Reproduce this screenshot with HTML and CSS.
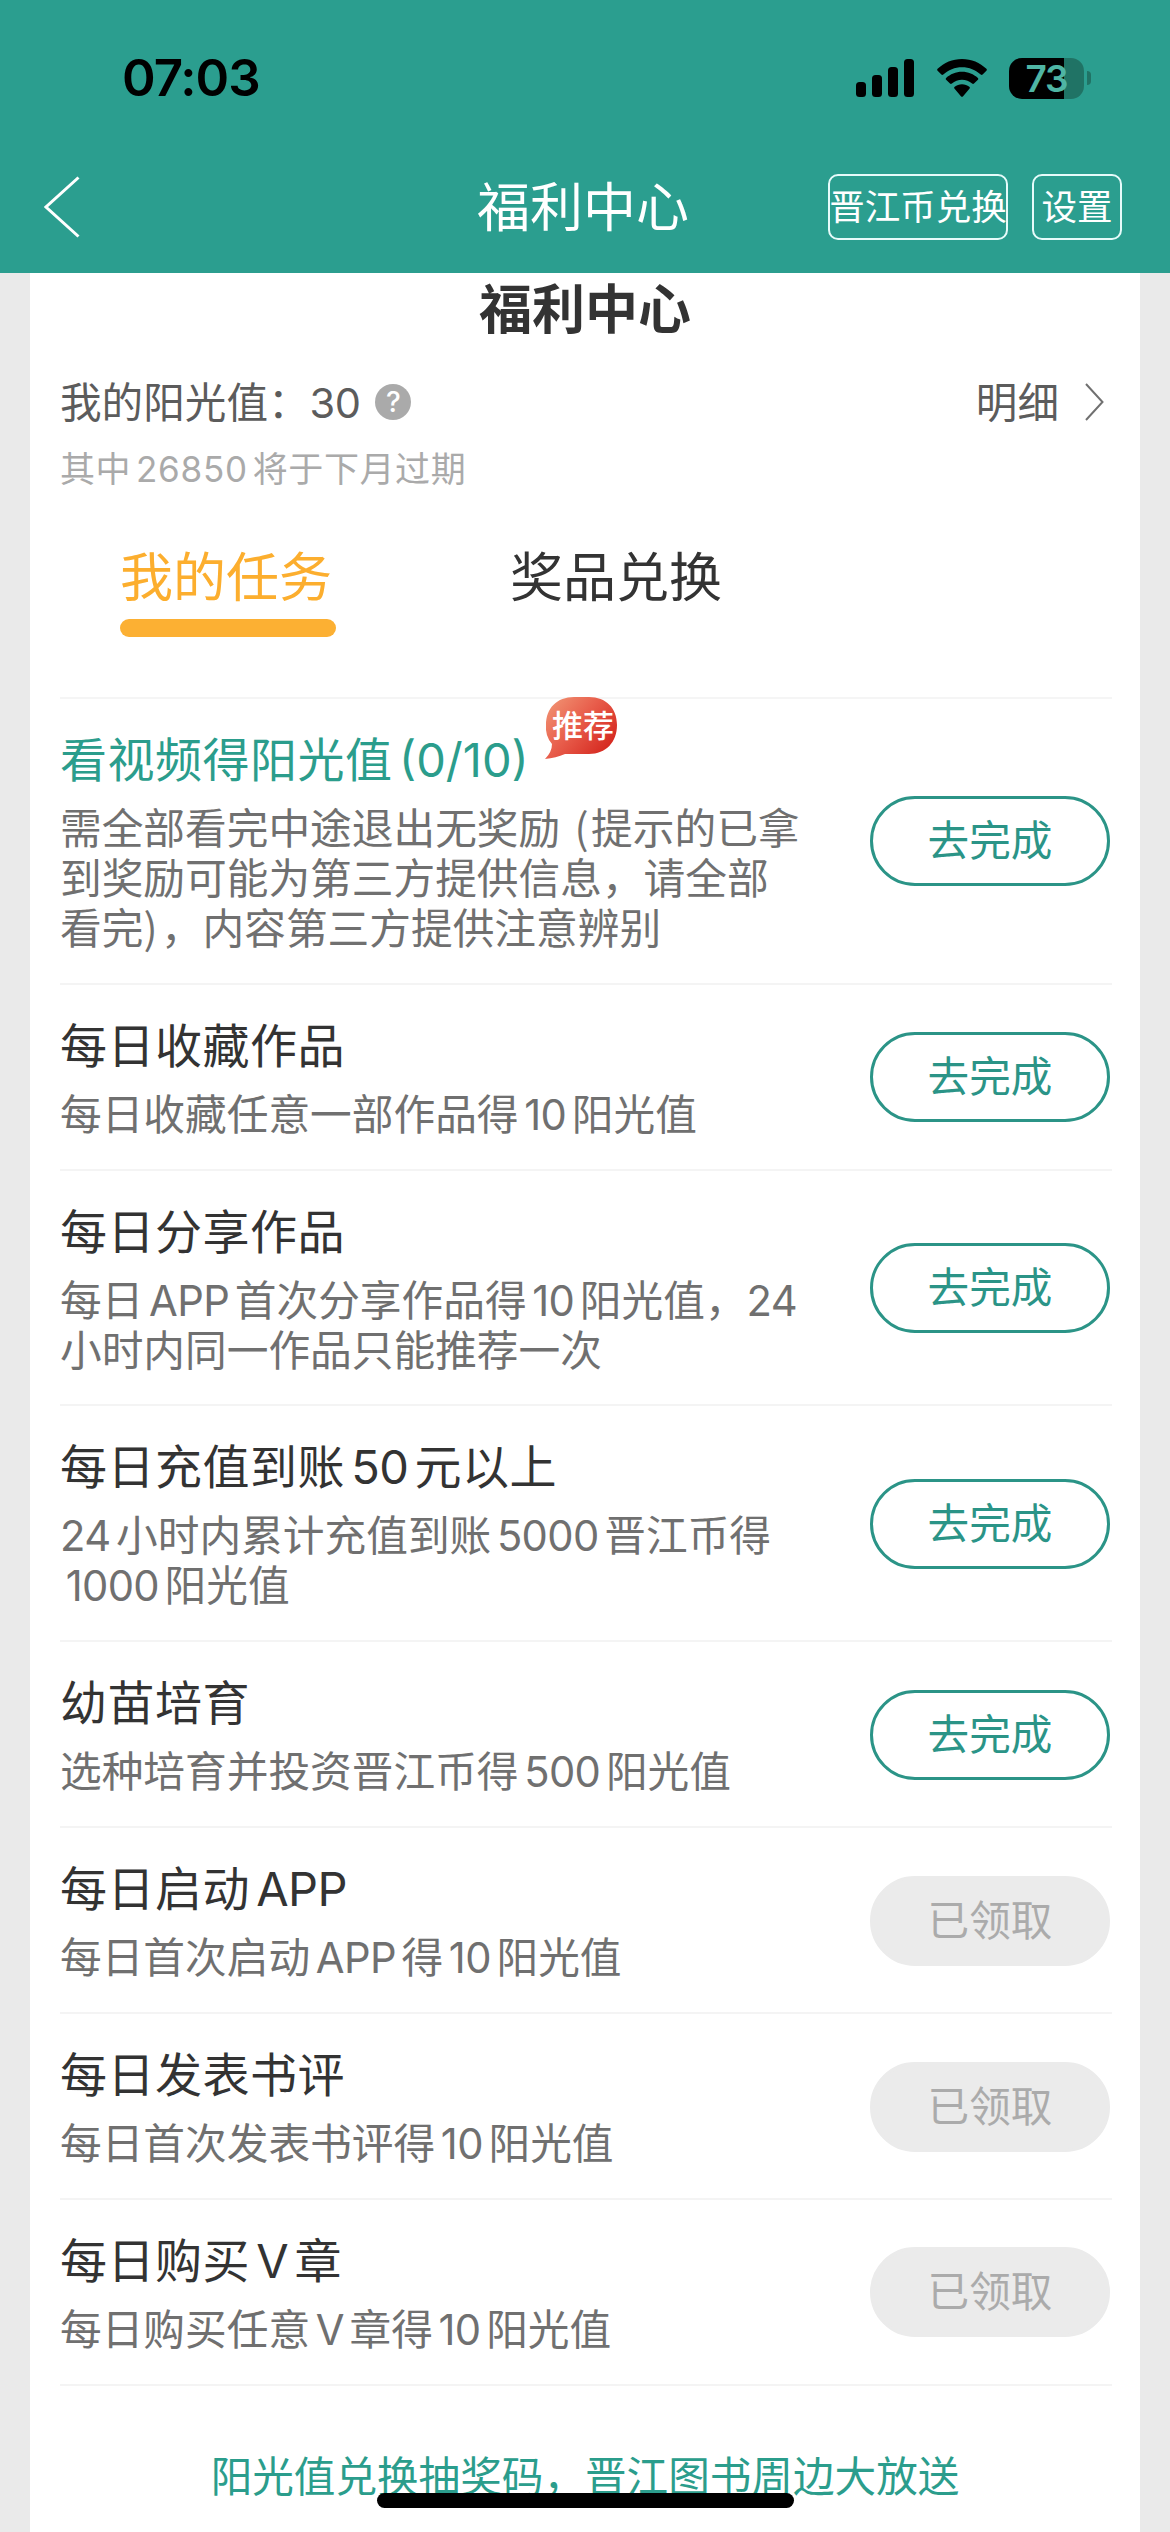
FILE: index.html
```html
<!DOCTYPE html>
<html lang="zh-CN">
<head>
<meta charset="utf-8">
<title>福利中心</title>
<link rel="stylesheet" href="styles.css">
</head>
<body>
<div class="screen">
  <header class="header">
    <div class="status">
      <span class="clock">07:03</span>
      <div class="status-icons">
        <svg class="signal" width="58" height="38" viewBox="0 0 58 38"><rect x="0" y="23" width="10" height="15" rx="3.5"/><rect x="16" y="16" width="10" height="22" rx="3.5"/><rect x="32" y="8" width="10" height="30" rx="3.5"/><rect x="48" y="0" width="10" height="38" rx="3.5"/></svg>
        <svg class="wifi" width="50" height="38" viewBox="0 0 50 38"><path d="M25 0C34.500 0 43 3.700 49.400 9.800Q50.300 10.800 49.400 11.800L45.600 15.600Q44.700 16.400 43.700 15.500C38.700 10.900 32.200 8.200 25 8.200S11.300 10.900 6.300 15.500Q5.300 16.400 4.400 15.600L.6 11.800Q-.3 10.800.6 9.800C7 3.700 15.500 0 25 0Z"/><path d="M25 12.700C31.200 12.700 36.700 15.100 40.900 18.900Q41.900 19.900 40.900 20.800L37 24.600Q36.100 25.400 35.100 24.600C32.400 22.200 28.800 20.800 25 20.800S17.600 22.200 14.900 24.600Q13.900 25.400 13 24.600L9.100 20.800Q8.100 19.900 9.100 18.900C13.300 15.100 18.800 12.700 25 12.700Z"/><path d="M25 25.300C27.800 25.300 30.300 26.200 32.300 27.800Q33.400 28.800 32.400 29.800L26.100 37.200Q25 38.200 23.900 37.200L17.600 29.800Q16.600 28.800 17.700 27.800C19.700 26.200 22.200 25.300 25 25.300Z"/></svg>
        <div class="battery"><span class="battery-body">73</span><span class="battery-tip"></span></div>
      </div>
    </div>
    <nav class="navbar">
      <svg class="back" width="36" height="62" viewBox="0 0 36 62"><path d="M34.500 1.500 2 31 34.500 60.500"/></svg>
      <h1 class="nav-title">福利中心</h1>
      <div class="nav-actions"><a class="nav-btn wide">晋江币兑换</a><a class="nav-btn narrow">设置</a></div>
    </nav>
  </header>

  <main class="card">
    <h2 class="page-title">福利中心</h2>
    <div class="balance">
      <span class="balance-text">我的阳光值：<span class="lat balance-num">30</span></span>
      <span class="help">?</span>
      <a class="detail"><span>明细</span><svg width="19" height="38" viewBox="0 0 19 38"><path d="M1 1 17.500 19 1 37"/></svg></a>
    </div>
    <p class="expire">其中<span class="lat gap">26850</span>将于下月过期</p>
    <div class="tabs"><a class="tab active">我的任务</a><a class="tab">奖品兑换</a></div>

    <ul class="tasks">
      <li class="task">
        <div class="info">
          <h3 class="name featured">看视频得阳光值<span class="lat count">(0/10)</span>
            <span class="badge"><svg width="72" height="62" viewBox="0 0 72 62"><defs><linearGradient id="red" x1="0" y1="0" x2="1" y2=".75"><stop offset="0" stop-color="#f29a78"/><stop offset=".5" stop-color="#e85d4b"/><stop offset="1" stop-color="#d4251d"/></linearGradient></defs><path fill="url(#red)" d="M29 0H44C61 0 72 11 72 28S61 57 44 57H20Q11 61 0 62Q7 55 7 47Q0 39 1 28C1 11 12 0 29 0Z"/></svg><span class="badge-text">推荐</span></span>
          </h3>
          <p class="desc">需全部看完中途退出无奖励<span class="open">(</span>提示的已拿<br>到奖励可能为第三方提供信息，请全部<br>看完<span class="close">)</span>，内容第三方提供注意辨别</p>
        </div>
        <a class="btn">去完成</a>
      </li>
      <li class="task">
        <div class="info"><h3 class="name">每日收藏作品</h3><p class="desc">每日收藏任意一部作品得<span class="lat gap">10</span>阳光值</p></div>
        <a class="btn">去完成</a>
      </li>
      <li class="task">
        <div class="info"><h3 class="name">每日分享作品</h3><p class="desc">每日<span class="lat gap">APP</span>首次分享作品得<span class="lat gap">10</span>阳光值，<span class="lat">24</span><br>小时内同一作品只能推荐一次</p></div>
        <a class="btn">去完成</a>
      </li>
      <li class="task">
        <div class="info"><h3 class="name">每日充值到账<span class="lat gap">50</span>元以上</h3><p class="desc"><span class="lat gap-after">24</span>小时内累计充值到账<span class="lat gap">5000</span>晋江币得<br><span class="lat gap">1000</span>阳光值</p></div>
        <a class="btn">去完成</a>
      </li>
      <li class="task">
        <div class="info"><h3 class="name">幼苗培育</h3><p class="desc">选种培育并投资晋江币得<span class="lat gap">500</span>阳光值</p></div>
        <a class="btn">去完成</a>
      </li>
      <li class="task">
        <div class="info"><h3 class="name">每日启动<span class="lat gap">APP</span></h3><p class="desc">每日首次启动<span class="lat gap">APP</span>得<span class="lat gap">10</span>阳光值</p></div>
        <a class="btn done">已领取</a>
      </li>
      <li class="task">
        <div class="info"><h3 class="name">每日发表书评</h3><p class="desc">每日首次发表书评得<span class="lat gap">10</span>阳光值</p></div>
        <a class="btn done">已领取</a>
      </li>
      <li class="task">
        <div class="info"><h3 class="name">每日购买<span class="lat gap">V</span>章</h3><p class="desc">每日购买任意<span class="lat gap">V</span>章得<span class="lat gap">10</span>阳光值</p></div>
        <a class="btn done">已领取</a>
      </li>
    </ul>
    <a class="promo">阳光值兑换抽奖码，晋江图书周边大放送</a>
  </main>
  <div class="home-bar"></div>
</div>
</body>
</html>
```
FILE: styles.css
```css
* { box-sizing: border-box; margin: 0; padding: 0; }
body {
  font-family: "Noto Sans CJK SC", sans-serif;
  background: #eaeaea;
  color: #333;
}
.screen {
  position: relative;
  width: 1170px;
  height: 2532px;
  overflow: hidden;
  display: flex;
  flex-direction: column;
}
.lat { font-family: Inter, "Noto Sans CJK SC", sans-serif; letter-spacing: -0.015em; line-height: 0; }
.gap { margin: 0 .135em; }
.gap-after { margin-right: .135em; }

.header { height: 273px; flex: none; background: #2b9e8f; }
.status {
  height: 156px;
  padding: 0 79px 0 122px;
  display: flex;
  align-items: center;
  justify-content: space-between;
}
.clock { font: 600 51px/60px Inter, sans-serif; color: #000; letter-spacing: -1px; }
.status-icons { display: flex; align-items: center; }
.wifi { margin: 0 22px 0 23px; }
.battery { display: flex; align-items: center; gap: 3px; }
.battery-body {
  width: 75px;
  height: 41px;
  border-radius: 13px;
  background: linear-gradient(90deg, #000 55px, #207365 55px);
  color: #4fb5a4;
  font: 600 37px/41px Inter, sans-serif;
  letter-spacing: -1px;
  text-align: center;
}
.battery-tip { width: 4px; height: 14px; border-radius: 0 4px 4px 0; background: #207365; }

.navbar {
  height: 102px;
  padding: 0 48px 0 44px;
  display: grid;
  grid-template-columns: 1fr auto 1fr;
  align-items: center;
}
.back { fill: none; stroke: #fff; stroke-width: 3; }
.nav-title { padding-bottom: 6px; font-size: 53px; line-height: 70px; font-weight: 400; color: #fff; }
.nav-actions { display: flex; gap: 24px; justify-content: flex-end; }
.nav-btn {
  height: 66px;
  border: 2px solid #e6fbfa;
  border-radius: 10px;
  color: #fff;
  font-size: 35.500px;
  line-height: 58px;
  display: flex;
  justify-content: center;
  white-space: nowrap;
}
.nav-btn.wide { width: 180px; }
.nav-btn.narrow { width: 90px; }

.card {
  flex: 1;
  margin: 0 30px;
  padding: 0 30px;
  background: #fff;
  display: flex;
  flex-direction: column;
}
.page-title { font-size: 53px; line-height: 67px; font-weight: 700; text-align: center; }
.balance {
  height: 60px;
  margin-top: 32px;
  padding-right: 6px;
  display: flex;
  align-items: center;
  font-size: 41.600px;
  line-height: 56px;
  color: #5c5c5c;
}
.balance-text, .detail span { padding-bottom: 4px; }
.help {
  width: 36px;
  height: 36px;
  margin-left: 15px;
  border-radius: 50%;
  background: #aaa;
  color: #fff;
  font: 500 28px/36px Inter, sans-serif;
  text-align: center;
}
.detail { margin-left: auto; display: flex; align-items: center; gap: 26px; }
.detail svg { fill: none; stroke: #707070; stroke-width: 2; }
.expire { margin-top: 10px; font-size: 35px; line-height: 50px; letter-spacing: .6px; color: #aaa; }
.expire .lat { letter-spacing: .8px; }
.tabs { margin: 48px 60px 60px; display: flex; gap: 174px; }
.tab { width: 216px; height: 97px; font-size: 53px; line-height: 69px; color: #333; display: flex; flex-direction: column; justify-content: space-between; }
.tab.active { color: #fcae2e; }
.tab.active::after { content: ""; height: 18px; border-radius: 9px; background: #fcb033; }

.tasks { list-style: none; border-top: 2px solid #f5f5f5; margin-right: -2px; }
.task {
  padding: 25px 2px 25px 0;
  border-bottom: 2px solid #f4f4f4;
  display: flex;
  align-items: center;
  justify-content: space-between;
}
.info { padding-bottom: 6px; }
.name { position: relative; width: max-content; margin-bottom: 12px; font-size: 47px; line-height: 66px; letter-spacing: .5px; font-weight: 400; }
.name.featured { color: #2b9d8c; }
.name .count { margin-left: .14em; letter-spacing: 0; }
.badge { position: absolute; left: 485px; top: -27px; width: 72px; height: 62px; }
.badge svg { position: absolute; left: 0; top: 0; }
.badge-text { position: absolute; left: 7px; top: 4px; font-size: 31px; line-height: 46px; font-weight: 500; letter-spacing: 0; color: #fff; white-space: nowrap; }
.desc { font-size: 41.700px; line-height: 49.900px; color: #707070; white-space: nowrap; }
.open, .close { display: inline-block; height: 49px; vertical-align: top; }
.open { width: .74em; text-align: right; padding-right: .06em; }
.close { width: .42em; }
.btn {
  flex: none;
  width: 240px;
  height: 90px;
  margin-top: 1px;
  border: 3px solid #2b9487;
  border-radius: 45px;
  color: #2b9487;
  font-size: 41.600px;
  line-height: 79px;
  text-align: center;
}
.btn.done { border-color: #ebebeb; background: #ebebeb; color: #ababab; }
.promo { margin-top: 58px; font-size: 41.600px; line-height: 60px; color: #2b9d8c; text-align: center; }
.home-bar {
  position: absolute;
  left: 377px;
  bottom: 24px;
  width: 417px;
  height: 15px;
  border-radius: 8px;
  background: #000;
}
```
